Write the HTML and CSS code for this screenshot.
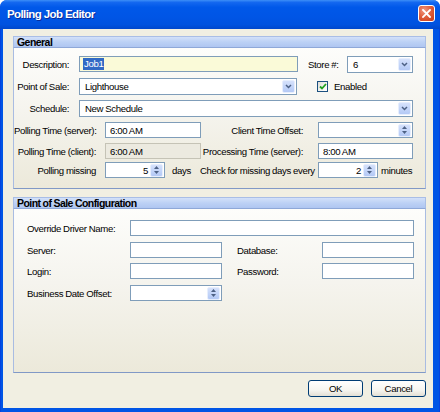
FILE: index.html
```html
<!DOCTYPE html>
<html>
<head>
<meta charset="utf-8">
<link rel="stylesheet" href="styles.css">
</head>
<body>
<div class="window">
  <div class="titlebar">
    <span class="title">Polling Job Editor</span>
    <span class="close"><svg width="9" height="9" viewBox="0 0 9 9"><path d="M1 1L8 8M8 1L1 8" stroke="#fff" stroke-width="1.8" stroke-linecap="square"/></svg></span>
  </div>
  <div class="client">
    <section class="group">
      <div class="group-head">General</div>
      <div class="group-body general">
        <div class="row">
          <span class="lbl lbl-a">Description:</span>
          <div class="tb tb-desc"><span class="sel">Job1</span></div>
          <span class="lbl lbl-store">Store #:</span>
          <div class="tb combo cb-store"><span class="val">6</span><span class="ddbtn"><svg width="7" height="5" viewBox="0 0 7 5"><path d="M1 1L3.5 3.5L6 1" fill="none" stroke="#4D6185" stroke-width="1.5"/></svg></span></div>
        </div>
        <div class="row">
          <span class="lbl lbl-a">Point of Sale:</span>
          <div class="tb combo cb-pos"><span class="val">Lighthouse</span><span class="ddbtn"><svg width="7" height="5" viewBox="0 0 7 5"><path d="M1 1L3.5 3.5L6 1" fill="none" stroke="#4D6185" stroke-width="1.5"/></svg></span></div>
          <span class="chk"><svg width="8" height="7" viewBox="0 0 8 7"><path d="M1 3.5L3 5.5L7 1" fill="none" stroke="#21A121" stroke-width="1.8"/></svg></span>
          <span class="chk-text">Enabled</span>
        </div>
        <div class="row">
          <span class="lbl lbl-a">Schedule:</span>
          <div class="tb combo cb-sched"><span class="val">New Schedule</span><span class="ddbtn"><svg width="7" height="5" viewBox="0 0 7 5"><path d="M1 1L3.5 3.5L6 1" fill="none" stroke="#4D6185" stroke-width="1.5"/></svg></span></div>
        </div>
        <div class="row r4">
          <span class="lbl lbl-b">Polling Time (server):</span>
          <div class="tb tb-time"><span class="val">6:00 AM</span></div>
          <span class="lbl lbl-c">Client Time Offset:</span>
          <div class="tb spin sp-offset"><span class="val"></span><span class="spbtn"><svg width="5" height="3" viewBox="0 0 5 3"><path d="M0 3L2.5 0L5 3Z" fill="#4D6185"/></svg><svg width="5" height="3" viewBox="0 0 5 3"><path d="M0 0L2.5 3L5 0Z" fill="#4D6185"/></svg></span></div>
        </div>
        <div class="row r5">
          <span class="lbl lbl-b">Polling Time (client):</span>
          <div class="tb tb-time tb-dis"><span class="val">6:00 AM</span></div>
          <span class="lbl lbl-c">Processing Time (server):</span>
          <div class="tb tb-proc"><span class="val">8:00 AM</span></div>
        </div>
        <div class="row r6">
          <span class="lbl lbl-b">Polling missing</span>
          <div class="tb spin sp-num"><span class="val num">5</span><span class="spbtn"><svg width="5" height="3" viewBox="0 0 5 3"><path d="M0 3L2.5 0L5 3Z" fill="#4D6185"/></svg><svg width="5" height="3" viewBox="0 0 5 3"><path d="M0 0L2.5 3L5 0Z" fill="#4D6185"/></svg></span></div>
          <span class="unit unit-days">days</span>
          <span class="lbl lbl-check">Check for missing days every</span>
          <div class="tb spin sp-num"><span class="val num">2</span><span class="spbtn"><svg width="5" height="3" viewBox="0 0 5 3"><path d="M0 3L2.5 0L5 3Z" fill="#4D6185"/></svg><svg width="5" height="3" viewBox="0 0 5 3"><path d="M0 0L2.5 3L5 0Z" fill="#4D6185"/></svg></span></div>
          <span class="unit unit-min">minutes</span>
        </div>
      </div>
    </section>
    <section class="group group-pos">
      <div class="group-head">Point of Sale Configuration</div>
      <div class="group-body pos">
        <div class="row">
          <span class="lbl lbl-p">Override Driver Name:</span>
          <div class="tb tb-wide"></div>
        </div>
        <div class="row">
          <span class="lbl lbl-p">Server:</span>
          <div class="tb tb-sm"></div>
          <span class="lbl lbl-q">Database:</span>
          <div class="tb tb-sm"></div>
        </div>
        <div class="row r-login">
          <span class="lbl lbl-p">Login:</span>
          <div class="tb tb-sm"></div>
          <span class="lbl lbl-q">Password:</span>
          <div class="tb tb-sm"></div>
        </div>
        <div class="row">
          <span class="lbl lbl-p">Business Date Offset:</span>
          <div class="tb spin tb-sm"><span class="val"></span><span class="spbtn"><svg width="5" height="3" viewBox="0 0 5 3"><path d="M0 3L2.5 0L5 3Z" fill="#4D6185"/></svg><svg width="5" height="3" viewBox="0 0 5 3"><path d="M0 0L2.5 3L5 0Z" fill="#4D6185"/></svg></span></div>
        </div>
      </div>
    </section>
    <div class="buttons">
      <button class="btn">OK</button>
      <button class="btn">Cancel</button>
    </div>
  </div>
</div>
</body>
</html>
```

FILE: styles.css
```css
* { box-sizing: border-box; }
html, body { margin: 0; padding: 0; }
body {
  width: 440px;
  height: 412px;
  background: #ffffff;
  font-family: "Liberation Sans", Arial, sans-serif;
  font-size: 9.6px;
  letter-spacing: -0.35px;
  word-spacing: -0.2px;
  color: #000;
}
.window {
  width: 440px;
  height: 412px;
  display: flex;
  flex-direction: column;
  background: linear-gradient(to right, #0831D9 0, #0055E5 1px, #0055E5 439px, #0831D9 440px);
  border-radius: 7px 7px 0 0;
  overflow: hidden;
}
.titlebar {
  height: 29px;
  flex: none;
  display: flex;
  align-items: flex-start;
  justify-content: space-between;
  padding: 0 5px 0 7px;
  background: linear-gradient(to bottom, #3D8FF7 0%, #1468F0 8%, #0058E9 25%, #0055E5 60%, #0052DF 85%, #0047CC 100%);
}
.title {
  color: #fff;
  font-weight: bold;
  font-size: 11.5px;
  letter-spacing: -0.6px;
  word-spacing: 0;
  line-height: 29px;
  text-shadow: 1px 1px 0 #0A2C9A;
}
.close {
  margin-top: 5px;
  width: 17px;
  height: 17px;
  border: 1px solid #fff;
  border-radius: 3px;
  background: radial-gradient(circle at 35% 30%, #F09A84 0%, #E0603E 45%, #C93A17 100%);
  display: flex;
  align-items: center;
  justify-content: center;
}
.client {
  flex: 1;
  margin: 0 7px 4px 3px;
  background: #F1EFE2;
  padding: 7px 7px 0 10px;
  display: flex;
  flex-direction: column;
}
.group-head {
  height: 12px;
  padding-left: 3px;
  font-weight: bold;
  font-size: 10.5px;
  letter-spacing: -0.55px;
  word-spacing: -0.3px;
  line-height: 11px;
  background: linear-gradient(to bottom, #D3E1F9 0%, #BCD1F5 50%, #AFC6F1 100%);
  border: 1px solid #A9BEE6;
  border-bottom: 1px solid #8EA8D8;
}
.group-body {
  border: 1px solid #A9BCE2;
  border-top: none;
  border-bottom-color: #8199C6;
  background: linear-gradient(to bottom, #FDFDFB 0%, #F5F4EE 45%, #ECE9DA 100%);
  display: flex;
  flex-direction: column;
}
.group-body.general {
  height: 141px;
  padding-top: 8px;
  gap: 6px;
}
.group-pos { margin-top: 8px; }
.group-body.pos {
  height: 164px;
  padding-top: 11px;
  padding-left: 13px;
  gap: 6px;
}
.row {
  height: 16px;
  display: flex;
  align-items: center;
  flex: none;
}
.general .r5 { margin-top: -1px; }
.general .r6 { margin-top: -3px; }
.pos .r-login { margin-top: -1px; }
.lbl { white-space: nowrap; flex: none; }
.lbl-a { width: 55px; text-align: right; margin-right: 10px; }
.lbl-b { width: 82px; text-align: right; margin-right: 9px; }
.lbl-c { width: 102px; text-align: right; margin-right: 15px; }
.lbl-store { width: 30px; margin-left: 10px; margin-right: 9px; }
.lbl-check { width: 112px; text-align: right; margin-right: 6px; }
.lbl-p { width: 103px; }
.lbl-q { width: 85px; margin-left: 15px; }
.unit { white-space: nowrap; flex: none; }
.unit-days { width: 28px; margin-left: 7px; }
.unit-min { margin-left: 3px; }

.tb {
  height: 16px;
  flex: none;
  border: 1px solid #7F9DB9;
  background: #fff;
  display: flex;
  align-items: center;
  padding-left: 4px;
  white-space: nowrap;
  overflow: hidden;
}
.tb-desc { width: 219px; background: #FAFAD8; padding-left: 3px; }
.sel { background: #316AC5; color: #fff; padding: 0 1px; line-height: 12px; }
.combo { height: 17px; padding-left: 5px; padding-right: 1px; }
.combo .val, .spin .val { flex: 1; }
.cb-store { width: 66px; }
.cb-pos { width: 218px; }
.cb-sched { width: 334px; }
.ddbtn {
  width: 13px;
  height: 13px;
  flex: none;
  border-radius: 2px;
  background: linear-gradient(to bottom, #D5E1FB 0%, #C1D3F8 60%, #B4C9F5 100%);
  border: 1px solid #E6EEFD;
  display: flex;
  align-items: center;
  justify-content: center;
}
.spin { padding-right: 1px; }
.spin .num { text-align: right; padding-right: 2px; }
.spbtn {
  width: 13px;
  height: 13px;
  flex: none;
  border-radius: 2px;
  background: linear-gradient(to bottom, #D5E1FB 0%, #C1D3F8 60%, #B4C9F5 100%);
  border: 1px solid #E6EEFD;
  display: flex;
  flex-direction: column;
  align-items: center;
  justify-content: center;
  gap: 2px;
}
.tb-time { width: 96px; }
.tb-dis { background: #ECEAE0; border-color: #C5C3B6; }
.sp-offset { width: 95px; }
.tb-proc { width: 95px; }
.sp-num { width: 60px; }
.tb-wide { width: 284px; }
.tb-sm { width: 92px; }

.chk {
  width: 11px;
  height: 11px;
  flex: none;
  margin-left: 20px;
  margin-right: 6px;
  border: 1px solid #1C5180;
  background: linear-gradient(135deg, #DCDCD7 0%, #F5F5F2 60%, #FFFFFF 100%);
  display: flex;
  align-items: center;
  justify-content: center;
}
.chk-text { white-space: nowrap; }

.buttons {
  margin-top: 7px;
  display: flex;
  justify-content: flex-end;
  gap: 8px;
}
.btn {
  width: 55px;
  height: 17px;
  padding: 0;
  border: 1px solid #003C74;
  border-radius: 3px;
  background: linear-gradient(to bottom, #FFFFFF 0%, #F6F5F0 60%, #E3DFD4 100%);
  font-family: "Liberation Sans", Arial, sans-serif;
  font-size: 9.6px;
  letter-spacing: -0.35px;
  color: #000;
}
```
